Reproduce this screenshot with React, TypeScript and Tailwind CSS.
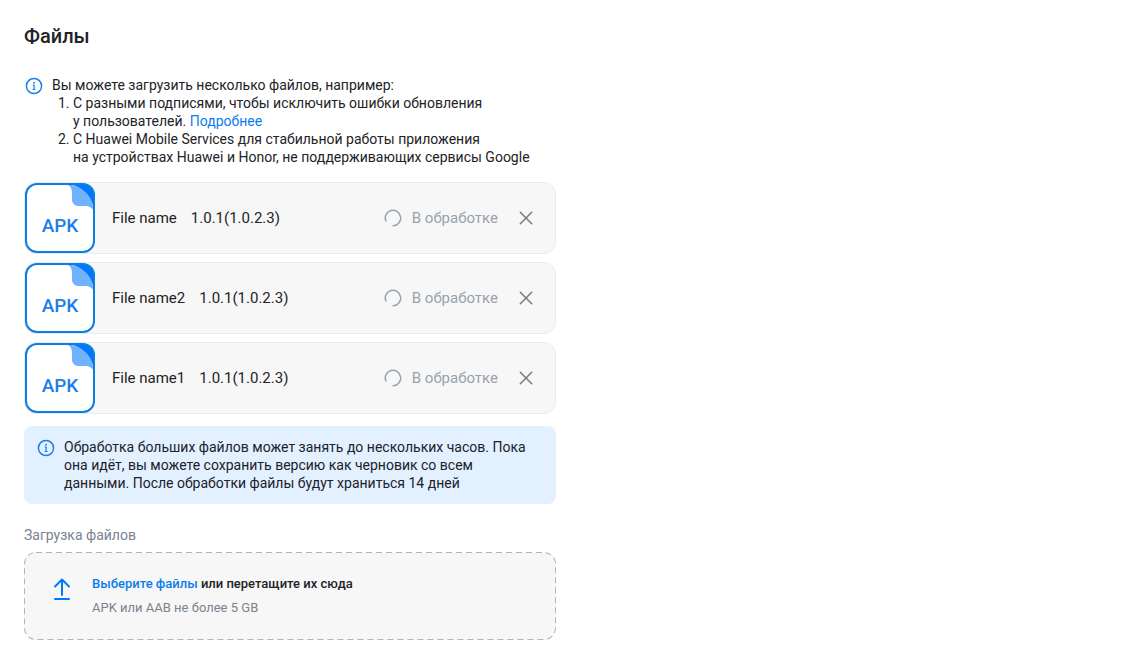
import React from "react";

function InfoIcon() {
  return (
    <svg width="20" height="20" viewBox="0 0 20 20" fill="none" className="shrink-0" aria-hidden="true">
      <circle cx="10" cy="10" r="7.6" stroke="#1a80f0" strokeWidth="1.5" />
      <circle cx="10" cy="6.8" r="0.95" fill="#1a80f0" />
      <path d="M9.3 9.2h.8v4.2" stroke="#1a80f0" strokeWidth="1.3" strokeLinecap="round" strokeLinejoin="round" />
      <path d="M9 13.5h2.1" stroke="#1a80f0" strokeLinecap="round" />
    </svg>
  );
}

function ApkIcon() {
  return (
    <svg width="70" height="70" viewBox="0 0 70 70" className="shrink-0" role="img" aria-label="APK">
      <rect x="1" y="1" width="68" height="68" rx="11" fill="#fff" />
      <path d="M40 1H58a11 11 0 0 1 11 11V30C69 14 56 1 40 1Z" fill="#0077ff" />
      <path d="M40 1C45 2 47 5 47 10V17a6 6 0 0 0 6 6H60C65 23 68 25 69 30C69 14 56 1 40 1Z" fill="#70b2ff" />
      <rect x="1" y="1" width="68" height="68" rx="11" fill="none" stroke="#0b7ee6" strokeWidth="2" />
      <text x="35" y="49" textAnchor="middle" fill="#1a7fe8" className="font-[Roboto,sans-serif] text-[19px] font-medium">APK</text>
    </svg>
  );
}

function Spinner() {
  return (
    <svg width="18" height="18" viewBox="0 0 18 18" fill="none" className="shrink-0" aria-hidden="true">
      <path d="M1.9 12A7.7 7.7 0 1 1 9.2 16.7" stroke="#99a2ad" strokeWidth="1.5" strokeLinecap="round" />
    </svg>
  );
}

const files = [
  { name: "File name", version: "1.0.1(1.0.2.3)" },
  { name: "File name2", version: "1.0.1(1.0.2.3)" },
  { name: "File name1", version: "1.0.1(1.0.2.3)" },
];

export default function App() {
  return (
    <main className="max-w-[580px] bg-white p-6 pb-3 font-[Roboto,sans-serif] text-[14px] leading-[18px] text-[#222326]">
      <h1 className="text-[20px] leading-6 font-medium">Файлы</h1>

      <section className="mt-7 flex gap-2">
        <InfoIcon />
        <div>
          <p>Вы можете загрузить несколько файлов, например:</p>
          <ol className="list-decimal pl-[21px]">
            <li>
              С разными подписями, чтобы исключить ошибки обновления
              <br />у пользователей.{" "}
              <a href="#more" className="text-[#0b7cec]">Подробнее</a>
            </li>
            <li>
              С Huawei Mobile Services для стабильной работы приложения
              <br />
              на устройствах Huawei и Honor, не поддерживающих сервисы Google
            </li>
          </ol>
        </div>
      </section>

      <ul className="mt-4 flex flex-col gap-2">
        {files.map((file) => (
          <li key={file.name} className="flex items-center rounded-xl border border-[#ebebec] bg-[#f7f7f7] pr-[17px] text-[15px] leading-5">
            <ApkIcon />
            <span className="ml-[17px]">{file.name}</span>
            <span className="ml-[14px]">{file.version}</span>
            <span className="ml-auto flex items-center gap-[10px] text-[#99a2ad]">
              <Spinner />В обработке
            </span>
            <button type="button" aria-label={"Удалить " + file.name} className="ml-4 flex size-6 items-center justify-center">
              <svg width="14" height="14" viewBox="0 0 14 14" fill="none" stroke="#74787e" strokeWidth="1.5" strokeLinecap="round" aria-hidden="true">
                <path d="M1.3 1.3l11.4 11.4M12.7 1.3L1.3 12.7" />
              </svg>
            </button>
          </li>
        ))}
      </ul>

      <section className="mt-3 flex gap-2 rounded-lg bg-[#e3f0ff] p-3 pr-2">
        <InfoIcon />
        <p className="text-[#1a222c]">
          Обработка больших файлов может занять до нескольких часов. Пока
          <br />
          она идёт, вы можете сохранить версию как черновик со всем
          <br />
          данными. После обработки файлы будут храниться 14 дней
        </p>
      </section>

      <section className="mt-[22px]">
        <h2 className="text-[14px] leading-[18px] text-[#7a8390]">Загрузка файлов</h2>
        <div className="relative mt-2 flex items-start rounded-xl bg-[#f7f7f7] px-6 py-5">
          <svg className="absolute inset-0 size-full overflow-hidden rounded-xl" aria-hidden="true">
            <rect width="100%" height="100%" rx="12" fill="none" stroke="#b4b4b4" strokeWidth="2" strokeDasharray="6 4" />
          </svg>
          <svg width="28" height="28" viewBox="0 0 28 28" fill="none" stroke="#0077ff" strokeWidth="2" strokeLinecap="round" strokeLinejoin="round" className="mt-1 shrink-0" aria-hidden="true">
            <path d="M14 19V3.5M7 10.5l7-7 7 7M7 23h14" />
          </svg>
          <div className="relative ml-4">
            <p className="text-[13px] leading-6 font-medium">
              <button type="button" className="text-[#0b7cec]">Выберите файлы</button> или перетащите их сюда
            </p>
            <p className="text-[13px] leading-6 text-[#7a8390]">APK или AAB не более 5 GB</p>
          </div>
        </div>
      </section>
    </main>
  );
}
